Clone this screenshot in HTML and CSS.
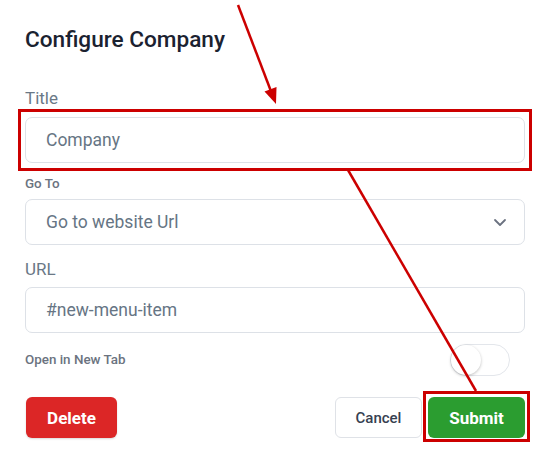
FILE: index.html
```html
<!DOCTYPE html>
<html lang="en">
<head>
<meta charset="utf-8">
<title>Configure Company</title>
<link rel="stylesheet" href="styles.css">
</head>
<body>
<div class="dialog">
  <h1 class="dialog-title">Configure Company</h1>

  <div class="field field-title">
    <label class="label-lg">Title</label>
    <div class="input"><span class="placeholder">Company</span></div>
  </div>

  <div class="field field-goto">
    <label class="label-sm">Go To</label>
    <div class="input select">
      <span class="value">Go to website Url</span>
      <svg class="chevron" width="14" height="9" viewBox="0 0 14 9"><path d="M2 2 L7 7 L12 2" fill="none" stroke="#6b7280" stroke-width="1.8" stroke-linecap="round" stroke-linejoin="round"/></svg>
    </div>
  </div>

  <div class="field field-url">
    <label class="label-lg label-url">URL</label>
    <div class="input"><span class="value">#new-menu-item</span></div>
  </div>

  <div class="toggle-row">
    <span class="label-sm">Open in New Tab</span>
    <span class="toggle"><span class="knob"></span></span>
  </div>

  <div class="actions">
    <button class="btn btn-delete">Delete</button>
    <div class="actions-right">
      <button class="btn btn-cancel">Cancel</button>
      <button class="btn btn-submit">Submit</button>
    </div>
  </div>
</div>

<svg class="annotations" width="553" height="466" viewBox="0 0 553 466">
  <rect x="19.5" y="110.5" width="511" height="59" fill="none" stroke="#cc0000" stroke-width="3"/>
  <rect x="424.5" y="392.5" width="104" height="48" fill="none" stroke="#cc0000" stroke-width="3"/>
  <line x1="238" y1="5" x2="270.5" y2="90" stroke="#cc0000" stroke-width="2.5"/>
  <polygon points="276,104 264.5,91.5 276.5,87" fill="#cc0000"/>
  <line x1="348" y1="170" x2="476" y2="391" stroke="#cc0000" stroke-width="2.5"/>
</svg>
</body>
</html>
```
FILE: styles.css
```css
* { box-sizing: border-box; }

html, body {
  margin: 0;
  background: #ffffff;
}

body {
  font-family: Roboto, "Liberation Sans", Arial, sans-serif;
  width: 553px;
  height: 466px;
  overflow: hidden;
  position: relative;
}

.dialog {
  padding: 26px 28px 0 25px;
  width: 553px;
}

.dialog-title {
  margin: 0 0 34px;
  font-size: 22.6px;
  line-height: 28px;
  font-weight: 500;
  color: #1b2230;
}

.field {
  display: flex;
  flex-direction: column;
}

.label-lg {
  font-size: 17px;
  line-height: 20px;
  color: #6a7886;
  margin-bottom: 9px;
}

.label-url {
  margin-bottom: 8px;
}

.label-sm {
  font-size: 13.4px;
  line-height: 16px;
  font-weight: 500;
  color: #6b7380;
}

.field-goto {
  margin-top: 13px;
}

.field-goto .label-sm {
  margin-bottom: 7px;
}

.field-url {
  margin-top: 14px;
}

.input {
  height: 46px;
  border: 1px solid #dde1e7;
  border-radius: 7px;
  padding: 0 20px;
  display: flex;
  align-items: center;
  font-size: 17.5px;
  color: #667584;
  background: #fff;
}

.select {
  justify-content: space-between;
  padding-right: 17px;
}

.chevron {
  display: block;
}

.toggle-row {
  margin-top: 11px;
  height: 32px;
  display: flex;
  align-items: center;
  justify-content: space-between;
  padding-right: 15px;
}

.toggle {
  width: 60px;
  height: 32px;
  border-radius: 16px;
  border: 1px solid #e3e6eb;
  background: #fff;
  position: relative;
  display: block;
}

.knob {
  position: absolute;
  left: 0;
  top: 0;
  width: 30px;
  height: 30px;
  border-radius: 50%;
  background: #fff;
  box-shadow: 0 1px 3px rgba(0, 0, 0, 0.25);
}

.actions {
  margin-top: 21px;
  display: flex;
  justify-content: space-between;
  align-items: center;
}

.actions-right {
  display: flex;
  gap: 6px;
}

.btn {
  height: 41px;
  border-radius: 6px;
  border: 1px solid transparent;
  font-family: Roboto, "Liberation Sans", Arial, sans-serif;
  cursor: pointer;
  padding: 0;
}

.btn-delete {
  width: 91px;
  margin-left: 1px;
  background: #dc2626;
  color: #fff;
  font-size: 17px;
  font-weight: 700;
  box-shadow: 0 1px 2px rgba(0, 0, 0, 0.15);
}

.btn-cancel {
  width: 87px;
  background: #fff;
  border-color: #dfe2e7;
  color: #374151;
  font-size: 15px;
  font-weight: 500;
}

.btn-submit {
  width: 97px;
  background: #2b9d30;
  color: #fff;
  font-size: 17px;
  font-weight: 700;
}

.annotations {
  position: absolute;
  left: 0;
  top: 0;
  pointer-events: none;
}
```
